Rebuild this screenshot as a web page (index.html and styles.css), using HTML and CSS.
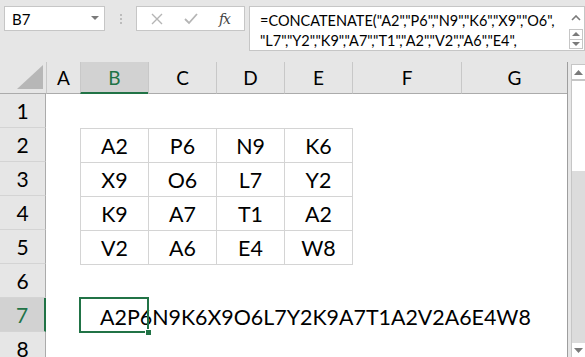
FILE: index.html
```html
<!DOCTYPE html>
<html lang="en">
<head>
  <meta charset="UTF-8" />
  <title>CONCATENATE</title>
  <link rel="stylesheet" href="styles.css">
</head>
<body>
  <div class="toolbar">
    <div class="namebox">
      <span>B7</span>
      <svg class="dd" width="8" height="5" viewBox="0 0 8 5"><path d="M0 0h8L4 4z" fill="#7a7a7a"/></svg>
    </div>
    <div class="grip"><i></i><i></i><i></i></div>
    <div class="fnbox">
      <svg width="12" height="12" viewBox="0 0 12 12"><path d="M1 1l10 10M11 1L1 11" stroke="#b5b5b5" stroke-width="1.4"/></svg>
      <svg width="14" height="12" viewBox="0 0 14 12"><path d="M1 6l4 4 8-9" stroke="#b5b5b5" stroke-width="1.8" fill="none"/></svg>
      <span class="fx">fx</span>
    </div>
    <div class="formula">
      <div class="ftext">=CONCATENATE("A2","P6","N9","K6","X9","O6",<br>"L7","Y2","K9","A7","T1","A2","V2","A6","E4",</div>
      <div class="fscroll">
        <svg width="10" height="6" viewBox="0 0 10 6"><path d="M1 5l4-4 4 4" stroke="#7a7a7a" stroke-width="1.6" fill="none"/></svg>
        <div class="spin">
          <div class="spin-up"><svg width="8" height="4" viewBox="0 0 8 4"><path d="M0 4h8L4 0z" fill="#7a7a7a"/></svg></div>
          <div class="spin-down"><svg width="8" height="4" viewBox="0 0 8 4"><path d="M0 0h8L4 4z" fill="#7a7a7a"/></svg></div>
        </div>
      </div>
    </div>
  </div>

  <div class="sheet">
    <div class="grid">
      <div class="corner"><svg width="26" height="24" viewBox="0 0 26 24"><path d="M26 0V24H0z" fill="#b7b7b7"/></svg></div>
      <div class="ch">A</div>
      <div class="ch active">B</div>
      <div class="ch">C</div>
      <div class="ch">D</div>
      <div class="ch">E</div>
      <div class="ch">F</div>
      <div class="ch">G</div>

      <div class="rh">1</div>
      <div></div><div></div><div></div><div></div><div></div><div></div><div></div>

      <div class="rh">2</div>
      <div></div>
      <div class="t first-col first-row">A2</div>
      <div class="t first-row">P6</div>
      <div class="t first-row">N9</div>
      <div class="t first-row last-col">K6</div>
      <div></div><div></div>

      <div class="rh">3</div>
      <div></div>
      <div class="t first-col">X9</div>
      <div class="t">O6</div>
      <div class="t">L7</div>
      <div class="t last-col">Y2</div>
      <div></div><div></div>

      <div class="rh">4</div>
      <div></div>
      <div class="t first-col">K9</div>
      <div class="t">A7</div>
      <div class="t">T1</div>
      <div class="t last-col">A2</div>
      <div></div><div></div>

      <div class="rh">5</div>
      <div></div>
      <div class="t first-col last-row">V2</div>
      <div class="t last-row">A6</div>
      <div class="t last-row">E4</div>
      <div class="t last-row last-col corner-cell">W8</div>
      <div></div><div></div>

      <div class="rh">6</div>
      <div></div><div></div><div></div><div></div><div></div><div></div><div></div>

      <div class="rh active">7</div>
      <div></div>
      <div class="cell-sel">
        <span class="overflow">A2P6N9K6X9O6L7Y2K9A7T1A2V2A6E4W8</span>
        <div class="sel-box"><div class="handle"></div></div>
      </div>
      <div></div><div></div><div></div><div></div><div></div>

      <div class="rh">8</div>
      <div></div><div></div><div></div><div></div><div></div><div></div><div></div>
    </div>

    <div class="vscroll">
      <div class="sb-btn"><svg width="9" height="5" viewBox="0 0 9 5"><path d="M0 5h9L4.5 0z" fill="#7a7a7a"/></svg></div>
      <div class="thumb"></div>
      <div class="track"></div>
      <div class="sb-btn down"><svg width="9" height="5" viewBox="0 0 9 5"><path d="M0 0h9L4.5 5z" fill="#7a7a7a"/></svg></div>
    </div>
  </div>
</body>
</html>
```

FILE: styles.css
```css
* {
  margin: 0;
  padding: 0;
  box-sizing: border-box;
}

body {
  width: 585px;
  height: 357px;
  overflow: hidden;
  background: #e6e6e6;
  font-family: Lato, "Open Sans", sans-serif;
  color: #000;
}

/* formula bar */
.toolbar {
  display: flex;
  align-items: flex-start;
  height: 62px;
  padding: 6px 0 0 4px;
}

.namebox {
  width: 101px;
  height: 25px;
  background: #fff;
  border: 1px solid #c6c6c6;
  display: flex;
  align-items: center;
  justify-content: space-between;
  padding: 0 5px 0 7px;
  font-size: 15px;
}

.grip {
  width: 31px;
  display: flex;
  flex-direction: column;
  align-items: center;
  gap: 2px;
  padding-top: 8px;
}

.grip i {
  width: 2px;
  height: 2px;
  background: #bcbcbc;
}

.fnbox {
  width: 109px;
  height: 25px;
  background: #fff;
  border: 1px solid #c6c6c6;
  display: flex;
  align-items: center;
  justify-content: space-between;
  padding: 0 14px 0 14px;
}

.fx {
  font-family: "DejaVu Serif", "Liberation Serif", serif;
  font-style: italic;
  font-size: 14px;
  color: #444;
  letter-spacing: -1px;
}

.formula {
  margin-left: 4px;
  width: 336px;
  height: 45px;
  background: #fff;
  border: 1px solid #c6c6c6;
  display: flex;
  justify-content: space-between;
}

.ftext {
  padding: 4px 0 0 10px;
  font-size: 14.5px;
  line-height: 20px;
  white-space: nowrap;
}

.fscroll {
  width: 17px;
  display: flex;
  flex-direction: column;
  align-items: center;
  padding-top: 8px;
  gap: 8px;
}

.spin {
  width: 14px;
  height: 20px;
  border: 1px solid #c6c6c6;
  display: flex;
  flex-direction: column;
}

.spin-up,
.spin-down {
  flex: 1;
  display: flex;
  justify-content: center;
  align-items: center;
}

.spin-up {
  border-bottom: 1px solid #c6c6c6;
}

/* sheet */
.sheet {
  display: flex;
  align-items: flex-start;
}

.grid {
  width: 567px;
  display: grid;
  grid-template-columns: 46px 34px 68px 68px 68px 68px 109px 106px;
  grid-template-rows: 32px repeat(8, 34px);
  background: #fff;
  box-shadow: 1px 0 0 #9e9e9e;
}

.corner {
  background: #e6e6e6;
  border-bottom: 1px solid #ababab;
  display: flex;
  justify-content: flex-end;
  align-items: flex-end;
  padding: 0 3px 4px 0;
}

.ch {
  background: #e6e6e6;
  border-left: 1px solid #c8c8c8;
  border-bottom: 1px solid #ababab;
  display: flex;
  align-items: center;
  justify-content: center;
  font-size: 19px;
}

.ch.active {
  background: #d2d2d2;
  color: #217346;
  border-bottom: 2px solid #217346;
}

.rh {
  background: #e6e6e6;
  border-right: 1px solid #ababab;
  border-bottom: 1px solid #d4d4d4;
  display: flex;
  align-items: center;
  justify-content: center;
  font-size: 21px;
}

.rh.active {
  background: #d2d2d2;
  color: #217346;
  border-right: 2px solid #217346;
}

.t {
  display: flex;
  align-items: center;
  justify-content: center;
  font-size: 21.4px;
  border-left: 1px solid #d4d4d4;
  border-top: 1px solid #d4d4d4;
}

.t.last-col {
  box-shadow: 1px 0 0 #d4d4d4;
}

.t.last-row {
  box-shadow: 0 1px 0 #d4d4d4;
}

.t.corner-cell {
  box-shadow: 1px 0 0 #d4d4d4, 0 1px 0 #d4d4d4, 1px 1px 0 #d4d4d4;
}

.cell-sel {
  position: relative;
  display: flex;
  align-items: center;
  font-size: 21.4px;
}

.overflow {
  padding: 3px 0 0 20px;
  white-space: nowrap;
}

.sel-box {
  position: absolute;
  left: -1px;
  top: -1px;
  width: 70px;
  height: 36px;
  border: 2px solid #217346;
}

.handle {
  position: absolute;
  right: -5px;
  bottom: -5px;
  width: 7px;
  height: 7px;
  background: #217346;
  border: 1px solid #fff;
}

/* vertical scrollbar */
.vscroll {
  margin: 2px 0 0 4px;
  width: 14px;
  height: 293px;
  background: #dcdcdc;
  border-left: 1px solid #c6c6c6;
  border-top: 1px solid #c6c6c6;
  display: flex;
  flex-direction: column;
}

.sb-btn {
  height: 14px;
  background: #fff;
  display: flex;
  justify-content: center;
  align-items: center;
}

.thumb {
  height: 92px;
  background: #fff;
  border-top: 2px solid #c6c6c6;
}

.track {
  flex: 1;
}
```
